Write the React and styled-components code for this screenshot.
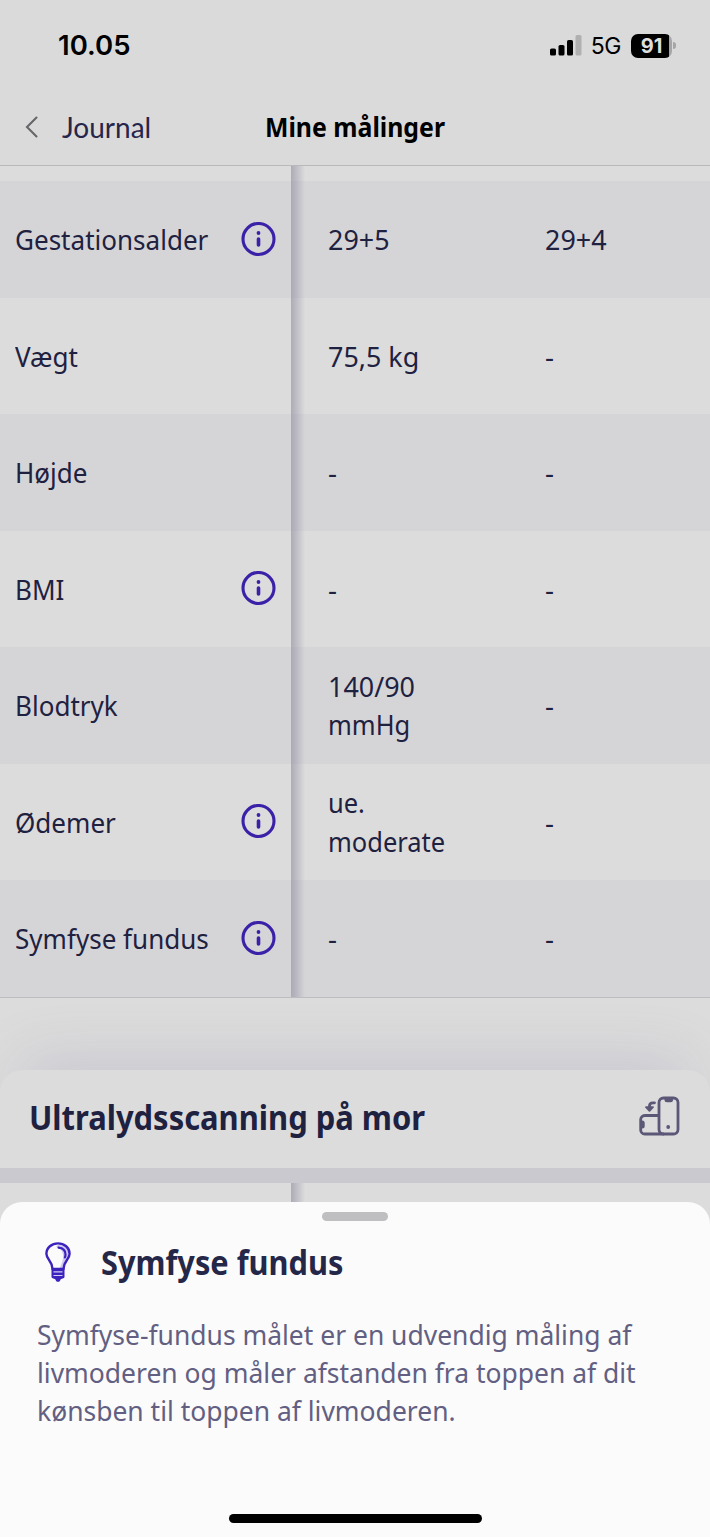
import React from "react"
import styled, { createGlobalStyle } from "styled-components"

const GlobalStyle = createGlobalStyle`
  * {
    box-sizing: border-box;
  }

  body {
    margin: 0;
    background: #dcdcdc;
  }
`

const Screen = styled.div`
  position: relative;
  width: 710px;
  height: 1537px;
  overflow: hidden;
  background: #dcdcdc;
  color: #1f2140;
  font-family: "Noto Sans", sans-serif;
  font-size: 28px;
  line-height: 38.5px;
`

const Top = styled.header`
  height: 166px;
  background: #dadadb;
  border-bottom: 1px solid #b9b9bb;
`

const StatusBar = styled.div`
  display: flex;
  align-items: center;
  justify-content: space-between;
  height: 88px;
  padding: 3px 34px 0 58px;
  color: #000;
  font-family: Inter, sans-serif;
`

const Time = styled.div`
  font-size: 27.5px;
  font-weight: 600;
`

const StatusIcons = styled.div`
  display: flex;
  align-items: center;
`

const Network = styled.span`
  margin: 2px 10px 0 9px;
  font-size: 23px;
  letter-spacing: -0.4px;
`

const Battery = styled.div`
  display: flex;
  align-items: center;
`

const BatteryBody = styled.div`
  width: 41px;
  height: 24px;
  border-radius: 7px;
  background: linear-gradient(to right, #000 38px, #a5a5a7 38px);
  color: #dedede;
  font-size: 20px;
  font-weight: 700;
  line-height: 24px;
  text-align: center;
`

const BatteryTip = styled.div`
  width: 3px;
  height: 7px;
  margin-left: 1px;
  border-radius: 0 3px 3px 0;
  background: #a5a5a7;
`

const NavBar = styled.nav`
  display: grid;
  grid-template-columns: 1fr auto 1fr;
  align-items: center;
  height: 77px;
  padding: 1px 25px 0;
`

const Back = styled.div`
  display: flex;
  align-items: center;
  gap: 24px;
  color: #26264a;
  font-family: Lato, sans-serif;
  line-height: 36px;
`

const NavTitle = styled.h1`
  width: 180px;
  margin: 0;
  color: #000;
  font-size: 27px;
  font-weight: 700;
  white-space: nowrap;
`

const Narrow = styled.span`
  display: block;
  white-space: nowrap;
  transform: scaleX(${p => p.$x || 0.935});
  transform-origin: left center;
`

const Table = styled.div`
  position: relative;
  height: ${p => p.$height || "auto"};
  padding-top: 15px;
  border-bottom: ${p => (p.$line ? "1px solid #bdbdc1" : "0")};

  &::after {
    content: "";
    position: absolute;
    top: 0;
    bottom: 0;
    left: 291px;
    width: 14px;
    background: linear-gradient(
      to right,
      rgba(128, 126, 146, 0.5),
      rgba(140, 138, 160, 0.34) 45%,
      rgba(150, 148, 170, 0)
    );
  }
`

const Row = styled.div`
  display: grid;
  grid-template-columns: 291px 217px 1fr;
  height: 116.5px;
  background: ${p => (p.$shade ? "#d5d5d8" : "#dcdcdc")};
`

const LabelCell = styled.div`
  display: flex;
  align-items: center;
  justify-content: space-between;
  padding: 0 15px 0 14.5px;
`

const ValueCell = styled.div`
  display: flex;
  flex-direction: column;
  justify-content: center;
  padding-left: 37px;
`

const Spacer = styled.div`
  height: 72.5px;
`

const Card = styled.section`
  display: flex;
  align-items: center;
  justify-content: space-between;
  height: 98px;
  padding: 0 30px 7px 29px;
  border-radius: 22px 22px 0 0;
  background: #dcdcdc;
  box-shadow: 0 -30px 60px -24px rgba(120, 112, 160, 0.24);
`

const CardTitle = styled.h2`
  margin: 3px 0 0;
  font-size: 34.5px;
  font-weight: 700;
`

const Band = styled.div`
  height: 15px;
  background: #cac9cf;
`

const Sheet = styled.aside`
  position: absolute;
  right: 0;
  bottom: 0;
  left: 0;
  display: flex;
  flex-direction: column;
  height: 335.5px;
  padding-top: 10px;
  border-radius: 22px 22px 0 0;
  background: #fbfbfb;
`

const Handle = styled.div`
  align-self: center;
  width: 66px;
  height: 9px;
  border-radius: 5px;
  background: #bfbfc2;
`

const SheetHead = styled.div`
  display: flex;
  align-items: center;
  gap: 30px;
  height: 40px;
  margin-top: 21px;
  padding-left: 45px;
`

const SheetTitle = styled.h2`
  margin: 2px 0 0;
  color: #252749;
  font-size: 34.5px;
  font-weight: 700;
`

const SheetText = styled.p`
  margin: 33.500px 0 0 36.500px;
  color: #625f82;
  line-height: 38px;
`

const HomeBar = styled.div`
  align-self: center;
  width: 253px;
  height: 9px;
  margin: auto 0 14.500px;
  border-radius: 5px;
  background: #000;
`

const InfoIcon = () => (
  <svg width="35" height="35" viewBox="0 0 35 35" fill="none">
    <circle cx="17.5" cy="17" r="15.5" stroke="#3a21a8" strokeWidth="3.1" />
    <circle cx="17.5" cy="11" r="1.9" fill="#3a21a8" />
    <path d="M17.5 17v6" stroke="#3a21a8" strokeWidth="3.6" strokeLinecap="round" />
  </svg>
)

const SignalIcon = () => (
  <svg width="32" height="21" viewBox="0 0 32 21">
    <rect x="0" y="13.5" width="6" height="7" rx="1.6" />
    <rect x="8.5" y="10" width="6" height="10.5" rx="1.6" />
    <rect x="17" y="5" width="6" height="15.5" rx="1.6" />
    <rect x="25.5" y="0" width="6" height="20.5" rx="1.6" fill="#b0b0b1" />
  </svg>
)

const BackIcon = () => (
  <svg width="13" height="22" viewBox="0 0 13 22" fill="none">
    <path d="M11.5 1.5L2 11l9.500 9.500" stroke="#666669" strokeWidth="2.1" strokeLinecap="round" />
  </svg>
)

const RotateIcon = () => (
  <svg width="41" height="40" viewBox="0 0 41 40" fill="none" stroke="#5a5777" strokeWidth="2.8">
    <rect x="20" y="2" width="19" height="36" rx="4.5" />
    <path d="M20 19.500H5.700a4 4 0 0 0-4 4V34a4 4 0 0 0 4 4H25" />
    <path d="M25.500 2.500h8.500v1.200a2.500 2.500 0 0 1-2.500 2.500H28a2.500 2.500 0 0 1-2.500-2.500z" fill="#5a5777" stroke="none" />
    <path d="M2 24.500h1.200a2.500 2.500 0 0 1 2.500 2.500v3a2.500 2.500 0 0 1-2.500 2.500H2z" fill="#5a5777" stroke="none" />
    <circle cx="29.200" cy="31" r="1.900" fill="#5a5777" stroke="none" />
    <path d="M15.500 6.800h-1.800c-2.200 0-3.200 1.200-3.200 3.200V12" strokeLinecap="round" />
    <path d="M7 11.200h7l-3.500 3.600z" fill="#5a5777" strokeWidth="1.800" strokeLinejoin="round" />
  </svg>
)

const BulbIcon = () => (
  <svg width="26" height="40" viewBox="0 0 26 40" fill="none" stroke="#3d23bd">
    <path d="M12.500 3.200c5.500-1 11 2.800 11 8.300 0 5-4.600 8-5.500 15h-3.500c3-6 5-12 2.500-17-1-2-2.500-3.800-6-4.800z" fill="#cfc7f0" stroke="none" />
    <path d="M7.500 27c0-4-1.400-6.300-3.300-8.800C2.200 15.600 1.400 14 1.400 11.800 1.400 5.600 6.800 1.400 13 1.400s11.600 4.200 11.600 10.400c0 2.200-.8 3.800-2.800 6.400-1.900 2.500-3.300 4.800-3.300 8.800z" strokeWidth="2.400" strokeLinejoin="round" />
    <path d="M13.500 5.600c4.400.4 7 3 7 7 0 1-.2 1.900-.6 2.800" strokeWidth="2.200" strokeLinecap="round" />
    <path d="M6.500 26.500h13v8.300c0 .8-.5 1.300-1.200 1.500l-2.600.9c-.4 1.700-1.400 2.600-2.700 2.600s-2.300-.9-2.700-2.600l-2.600-.9c-.7-.2-1.200-.7-1.200-1.500z" fill="#3d23bd" stroke="none" />
    <path d="M8.500 29.800h9M8.500 33.500h9" stroke="#d3ccf4" strokeWidth="1.200" />
  </svg>
)

const rows = [
  { label: "Gestationsalder", info: true, values: [["29+5"], ["29+4"]] },
  { label: "Vægt", values: [["75,5 kg"], ["-"]] },
  { label: "Højde", values: [["-"], ["-"]] },
  { label: "BMI", info: true, values: [["-"], ["-"]] },
  { label: "Blodtryk", values: [["140/90", "mmHg"], ["-"]] },
  { label: "Ødemer", info: true, values: [["ue.", "moderate"], ["-"]] },
  { label: "Symfyse fundus", info: true, values: [["-"], ["-"]] },
]

const valueWidth = text => {
  if (text === "-") return 1
  return /\d/.test(text) ? 0.96 : 0.91
}

const App = () => (
  <Screen>
    <GlobalStyle />
    <Top>
      <StatusBar>
        <Time>10.05</Time>
        <StatusIcons>
          <SignalIcon />
          <Network>5G</Network>
          <Battery>
            <BatteryBody>91</BatteryBody>
            <BatteryTip />
          </Battery>
        </StatusIcons>
      </StatusBar>
      <NavBar>
        <Back>
          <BackIcon />
          <span>Journal</span>
        </Back>
        <NavTitle>
          <Narrow $x={0.92}>Mine målinger</Narrow>
        </NavTitle>
      </NavBar>
    </Top>
    <Table $line>
      {rows.map((row, i) => (
        <Row key={row.label} $shade={i % 2 === 0}>
          <LabelCell>
            <Narrow $x={0.93}>{row.label}</Narrow>
            {row.info && <InfoIcon />}
          </LabelCell>
          {row.values.map((lines, j) => (
            <ValueCell key={j}>
              {lines.map(line => (
                <Narrow key={line} $x={valueWidth(line)}>
                  {line}
                </Narrow>
              ))}
            </ValueCell>
          ))}
        </Row>
      ))}
    </Table>
    <Spacer />
    <Card>
      <CardTitle>
        <Narrow $x={0.896}>Ultralydsscanning på mor</Narrow>
      </CardTitle>
      <RotateIcon />
    </Card>
    <Band />
    <Table $height="60px" />
    <Sheet>
      <Handle />
      <SheetHead>
        <BulbIcon />
        <SheetTitle>
          <Narrow $x={0.891}>Symfyse fundus</Narrow>
        </SheetTitle>
      </SheetHead>
      <SheetText>
        <Narrow $x={0.945}>
          Symfyse-fundus målet er en udvendig måling af
          <br />
          livmoderen og måler afstanden fra toppen af dit
          <br />
          kønsben til toppen af livmoderen.
        </Narrow>
      </SheetText>
      <HomeBar />
    </Sheet>
  </Screen>
)

export default App
